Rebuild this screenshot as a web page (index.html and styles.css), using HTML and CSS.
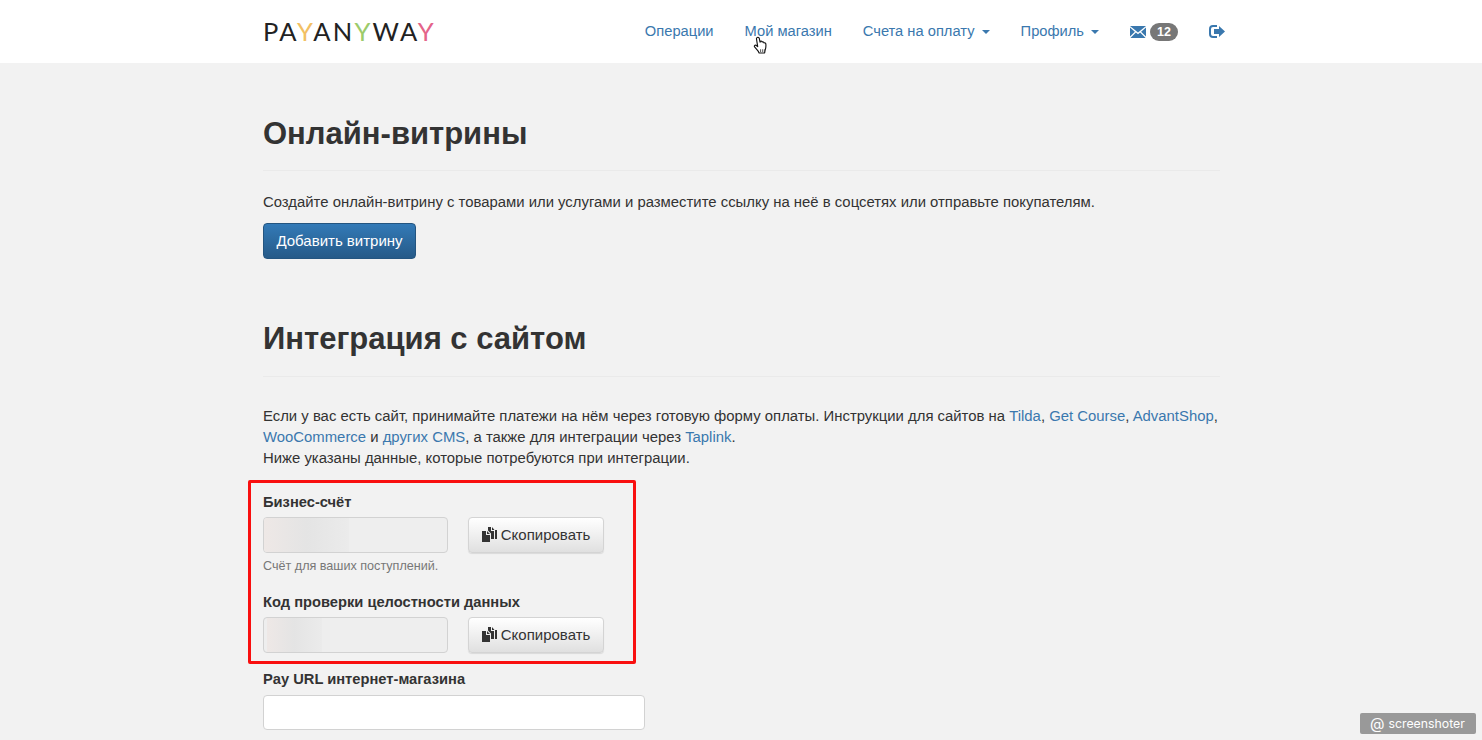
FILE: index.html
```html
<!DOCTYPE html>
<html lang="ru">
<head>
    <meta charset="UTF-8">
    <meta name="viewport" content="width=device-width, initial-scale=1.0">
    <title>PayAnyWay</title>
    <link rel="stylesheet" href="styles.css">
</head>
<body>
    <!-- Top navigation -->
    <header class="navbar">
        <div class="container navbar-inner">
            <a class="logo" href="#">PA<span class="y-yellow">Y</span>AN<span class="y-green">Y</span>WA<span class="y-pink">Y</span></a>
            <nav class="nav">
                <a href="#">Операции</a>
                <a href="#">Мой магазин</a>
                <a href="#">Счета на оплату <span class="caret"></span></a>
                <a href="#">Профиль <span class="caret"></span></a>
                <a href="#" class="nav-mail">
                    <svg class="icon-mail" viewBox="0 0 16 12"><path d="M0 0h16L8 6.600zM0 1.600v8.900l4.900-4.800zM16 1.600v8.900l-4.900-4.800zM5.900 6.600L8 8.300l2.100-1.700L15.600 12H.4z"/></svg>
                    <span class="badge">12</span>
                </a>
                <a href="#" class="nav-exit">
                    <svg class="icon-exit" viewBox="0 0 16 13"><path d="M4 0h4v2H4a2 2 0 0 0-2 2v5a2 2 0 0 0 2 2h4v2H4a4 4 0 0 1-4-4V4a4 4 0 0 1 4-4z"/><path d="M5 4h5V1l6 5.500-6 5.500V9H5z"/></svg>
                </a>
            </nav>
        </div>
    </header>

    <main class="container">
        <h1 class="page-title first">Онлайн-витрины</h1>
        <p class="lead-text">Создайте онлайн-витрину с товарами или услугами и разместите ссылку на неё в соцсетях или отправьте покупателям.</p>
        <a href="#" class="btn btn-primary">Добавить витрину</a>

        <h1 class="page-title second">Интеграция с сайтом</h1>
        <p class="lead-text integration-text">
            Если у вас есть сайт, принимайте платежи на нём через готовую форму оплаты. Инструкции для сайтов на <a href="#">Tilda</a>, <a href="#">Get Course</a>, <a href="#">AdvantShop</a>,<br>
            <a href="#">WooCommerce</a> и <a href="#">других CMS</a>, а также для интеграции через <a href="#">Taplink</a>.<br>
            Ниже указаны данные, которые потребуются при интеграции.
        </p>

        <form class="integration-form">
            <div class="highlight"></div>

            <label class="field-label">Бизнес-счёт</label>
            <div class="field-row">
                <div class="input readonly"><span class="blur blur-long"></span></div>
                <button type="button" class="btn btn-default"><svg class="icon-copy" viewBox="0 0 15 15"><path d="M0 4h4v4h4v7H0zM5 4l3 3H5zM6 0h3v4h3v8H9V6.500L6 3.500zM10 0l2.500 3H10z"/><path d="M13 3h2v9h-2z"/></svg> Скопировать</button>
            </div>
            <div class="help-text">Счёт для ваших поступлений.</div>

            <label class="field-label second-label">Код проверки целостности данных</label>
            <div class="field-row">
                <div class="input readonly"><span class="blur blur-short"></span></div>
                <button type="button" class="btn btn-default"><svg class="icon-copy" viewBox="0 0 15 15"><path d="M0 4h4v4h4v7H0zM5 4l3 3H5zM6 0h3v4h3v8H9V6.500L6 3.500zM10 0l2.500 3H10z"/><path d="M13 3h2v9h-2z"/></svg> Скопировать</button>
            </div>

            <label class="field-label third-label">Pay URL интернет-магазина</label>
            <div class="input wide"></div>
        </form>
    </main>

    <!-- Hand cursor from the recording -->
    <svg class="cursor" viewBox="0 0 16 20"><path d="M4.500 1.500c1-.6 2 0 2.200 1l.8 4 .4-1c1-.5 1.700 0 1.900.8 1-.5 1.700 0 1.900.9 1-.3 1.900.3 2 1.300.2 2 0 4.500-.8 6.500l-.5 3H6.500L5.500 16 1.700 11.500c-.7-1 .3-2.300 1.500-1.700l1.800 1.400L3.700 3c-.1-.6.200-1.200.8-1.500z" fill="#fff" stroke="#111" stroke-width="1.200" stroke-linejoin="round"/><path d="M8 14v3M10 14v3M12 14v3" stroke="#333" stroke-width=".8"/></svg>

    <div class="watermark"><span class="at">@</span><span>screenshoter</span></div>
</body>
</html>
```

FILE: styles.css
```css
html, body {
    height: 740px;
    overflow: hidden;
}

body {
    margin: 0;
    background-color: #f2f2f2;
    color: #333333;
    font-family: "Liberation Sans", Arial, sans-serif;
    font-size: 14.88px;
    line-height: 21px;
    position: relative;
}

a {
    color: #3a78ae;
    text-decoration: none;
}

.container {
    width: 957px;
    margin-left: 263px;
}

/* Navbar */
.navbar {
    height: 63px;
    background-color: #ffffff;
}

.navbar-inner {
    height: 63px;
    display: flex;
    align-items: center;
    justify-content: space-between;
}

.logo {
    font-family: "Lato", "Liberation Sans", sans-serif;
    font-size: 25.5px;
    font-weight: 400;
    letter-spacing: 2.2px;
    color: #222222;
    line-height: 63px;
}

.y-yellow { color: #f2c063; }
.y-green { color: #9ccb6a; }
.y-pink { color: #e4648a; }

.nav {
    display: flex;
    align-items: center;
    gap: 31px;
    font-size: 14.7px;
    margin-right: -5px;
}

.caret {
    display: inline-block;
    width: 0;
    height: 0;
    margin-left: 3px;
    vertical-align: middle;
    border-top: 4px solid #3a78ae;
    border-left: 4px solid transparent;
    border-right: 4px solid transparent;
}

.nav-mail {
    display: flex;
    align-items: center;
    gap: 4px;
}

.icon-mail {
    width: 16px;
    height: 12px;
    fill: #3a78ae;
}

.icon-exit {
    width: 16px;
    height: 13px;
    fill: #3a78ae;
    display: block;
}

.badge {
    background-color: #777777;
    color: #ffffff;
    font-size: 12.5px;
    font-weight: bold;
    line-height: 18px;
    height: 18px;
    padding: 0 7px;
    border-radius: 9px;
}

/* Headings */
.page-title {
    margin: 0;
    font-size: 31px;
    line-height: 36px;
    font-weight: bold;
    border-bottom: 1px solid #eaeaea;
}

.page-title.first {
    padding: 53px 0 18px;
}

.page-title.second {
    padding: 62px 0 19px;
}

.lead-text {
    margin: 21px 0 0;
}

.lead-text.integration-text {
    margin-top: 29px;
}

/* Buttons */
.btn {
    display: inline-block;
    box-sizing: border-box;
    height: 36px;
    line-height: 34px;
    border-radius: 4px;
    font-family: inherit;
    font-size: 15px;
    text-align: center;
    padding: 0;
}

.btn-primary {
    width: 153px;
    margin-top: 10px;
    color: #ffffff;
    background: linear-gradient(to bottom, #337ab7, #265a88);
    border: 1px solid #245580;
}

.btn-default {
    width: 136px;
    color: #333333;
    background: linear-gradient(to bottom, #ffffff, #e0e0e0);
    border: 1px solid #d4d4d4;
    box-shadow: 0 1px 1px rgba(0, 0, 0, 0.1);
}

.icon-copy {
    width: 15px;
    height: 15px;
    fill: #333333;
    vertical-align: -2px;
}

/* Integration form */
.integration-form {
    position: relative;
    margin-top: 14px;
}

.highlight {
    position: absolute;
    left: -15px;
    top: -3px;
    width: 382px;
    height: 178px;
    border: 3px solid #f90f0f;
    border-radius: 2px;
}

.field-label {
    display: block;
    font-size: 14.7px;
    font-weight: bold;
    line-height: 21px;
    padding-top: 9px;
    margin-bottom: 4px;
}

.field-label.second-label {
    padding-top: 17px;
    margin-bottom: 4px;
}

.field-label.third-label {
    padding-top: 16px;
    margin-bottom: 5px;
}

.field-row {
    display: flex;
    gap: 20px;
}

.input {
    box-sizing: border-box;
    width: 185px;
    height: 36px;
    border: 1px solid #d2d2d2;
    border-radius: 4px;
    background-color: #ffffff;
    overflow: hidden;
}

.input.readonly {
    background-color: #eeeeee;
    position: relative;
}

.input.wide {
    width: 382px;
    height: 35px;
}

.blur {
    position: absolute;
    display: block;
    height: 34px;
    top: 0;
    background: linear-gradient(to right, #eee8e6, #e4e4e4 50%, #ebebeb);
}

.blur-long {
    left: 0;
    width: 85px;
}

.blur-short {
    left: 3px;
    width: 55px;
}

.help-text {
    font-size: 12.6px;
    line-height: 18px;
    color: #777777;
    margin-top: 4px;
}

/* Cursor */
.cursor {
    position: absolute;
    left: 753px;
    top: 36px;
    width: 15px;
    height: 19px;
}

/* Watermark */
.watermark {
    position: absolute;
    left: 1360px;
    top: 713px;
    width: 116px;
    height: 21px;
    box-sizing: border-box;
    padding-left: 10px;
    display: flex;
    align-items: center;
    gap: 4px;
    background-color: #999999;
    border-radius: 2px;
    color: #ffffff;
    font-family: "Inter", sans-serif;
    font-size: 12.3px;
    white-space: nowrap;
}

.at {
    font-size: 15px;
}
```
